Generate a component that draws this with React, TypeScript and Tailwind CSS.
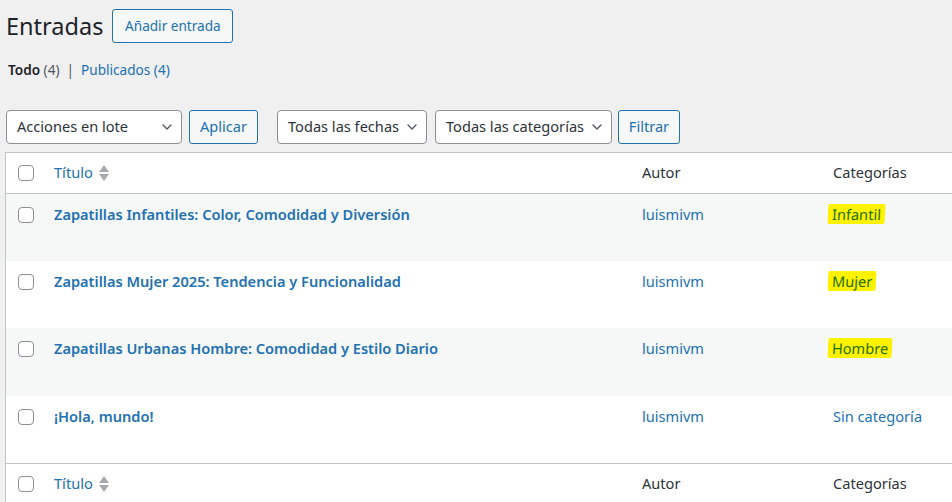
import { ChevronDown } from 'lucide-react'

const font = { fontFamily: '"Noto Sans", "Open Sans", sans-serif' }

const posts = [
    { title: 'Zapatillas Infantiles: Color, Comodidad y Diversión', cat: 'Infantil', mark: true, h: 'h-[67px]' },
    { title: 'Zapatillas Mujer 2025: Tendencia y Funcionalidad', cat: 'Mujer', mark: true, h: 'h-[67px]' },
    { title: 'Zapatillas Urbanas Hombre: Comodidad y Estilo Diario', cat: 'Hombre', mark: true, h: 'h-[68px]' },
    { title: '¡Hola, mundo!', cat: 'Sin categoría', mark: false, h: 'h-[67px]' },
]

function Check() {
    return <span className="block w-4 h-4 rounded-[4px] border border-[#8c8f94] bg-white" />
}

function SortIcon() {
    return (
        <svg width="12" height="18" viewBox="0 0 12 18" className="ml-[5px]">
            <path d="M6 1 L11 8 H1 Z" fill="#a7aaad" />
            <path d="M1 10 H11 L6 17 Z" fill="#a7aaad" />
        </svg>
    )
}

function Select({ label, width }: { label: string; width: string }) {
    return (
        <div className={`${width} h-[34px] flex items-center justify-between bg-white border border-[#8c8f94] rounded-[4px] pl-[10px] pr-[6px] text-[14.6px] text-[#2c3338]`}>
            <span className="whitespace-nowrap">{label}</span>
            <ChevronDown size={16} strokeWidth={2} className="text-[#50575e] shrink-0" />
        </div>
    )
}

function Btn({ label, width }: { label: string; width: string }) {
    return (
        <button className={`${width} h-[34px] border border-[#2271b1] rounded-[3px] bg-[#f6f7f7] text-[#2271b1] text-[14.6px]`}>
            {label}
        </button>
    )
}

function HeadRow({ top }: { top: boolean }) {
    return (
        <div className={`flex items-center h-[41px] bg-white ${top ? 'border-b' : 'border-t'} border-[#c3c4c7] text-[14.6px] text-[#2c3338]`}>
            <div className="w-[48px] pl-[12px]"><Check /></div>
            <div className="w-[588px] flex items-center text-[#2271b1]">Título<SortIcon /></div>
            <div className="w-[191px]">Autor</div>
            <div>Categorías</div>
        </div>
    )
}

export default function App() {
    return (
        <div className="w-[952px] h-[502px] overflow-hidden bg-[#f0f0f1]" style={font}>
            <div className="flex items-center pl-[6px] pt-[9px]">
                <h1 className="text-[23.5px] text-[#1d2327] leading-[34px]">Entradas</h1>
                <button className="ml-[9px] h-[34px] w-[121px] border border-[#2271b1] rounded-[3px] bg-[#f6f7f7] text-[#2271b1] text-[13.6px]">
                    Añadir entrada
                </button>
            </div>

            <div className="mt-[17px] pl-[8px] text-[13.6px] text-[#50575e] flex gap-[4px]">
                <span><b className="text-[#1d2327] font-semibold">Todo</b> (4)</span>
                <span className="px-[3px]">|</span>
                <span className="text-[#2271b1]">Publicados (4)</span>
            </div>

            <div className="flex items-center mt-[30px] pl-[6px]">
                <Select label="Acciones en lote" width="w-[176px]" />
                <div className="ml-[7px]"><Btn label="Aplicar" width="w-[69px]" /></div>
                <div className="ml-[19px]"><Select label="Todas las fechas" width="w-[150px]" /></div>
                <div className="ml-[8px]"><Select label="Todas las categorías" width="w-[177px]" /></div>
                <div className="ml-[6px]"><Btn label="Filtrar" width="w-[62px]" /></div>
            </div>

            <div className="mt-[8px] ml-[5px] w-[1200px] border border-[#c3c4c7]">
                <HeadRow top={true} />
                {posts.map((p, i) => (
                    <div key={p.title} className={`flex items-start ${p.h} pt-[10px] ${i % 2 === 0 ? 'bg-[#f6f7f7]' : 'bg-white'} text-[14.6px]`}>
                        <div className="w-[48px] pl-[12px] pt-[3px]"><Check /></div>
                        <div className="w-[588px] font-semibold text-[#2271b1] leading-[20px]">{p.title}</div>
                        <div className="w-[191px] text-[#2271b1] leading-[20px]">luismivm</div>
                        <div className="leading-[20px]">
                            {p.mark ? (
                                <span className="inline-block -ml-[5px] px-[4px] bg-[#fff200] text-[#227100] -skew-x-3 rounded-[2px]">
                                    {p.cat}
                                </span>
                            ) : (
                                <span className="text-[#2271b1]">{p.cat}</span>
                            )}
                        </div>
                    </div>
                ))}
                <HeadRow top={false} />
            </div>
        </div>
    )
}
